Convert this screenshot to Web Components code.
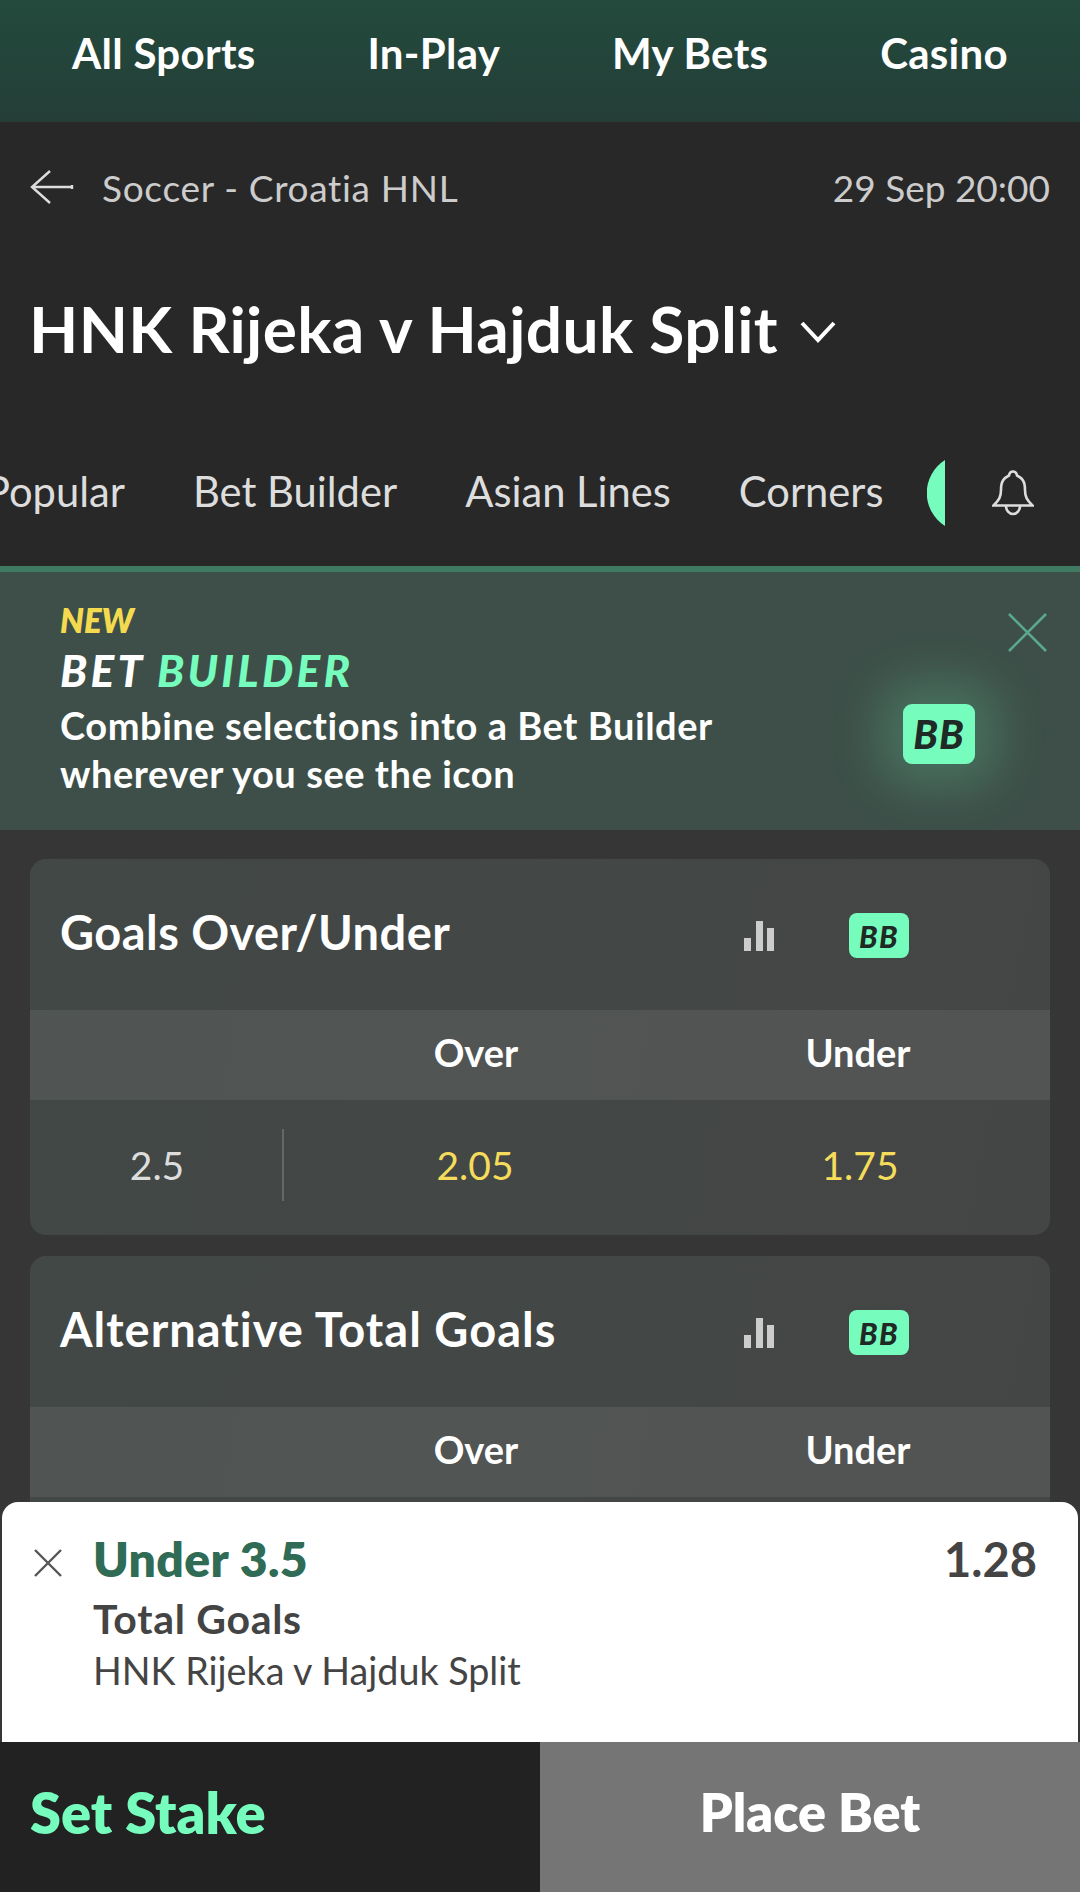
<!DOCTYPE html>
<html lang="en"><head><meta charset="utf-8"><title>HNK Rijeka v Hajduk Split</title>
<style>html,body{margin:0;padding:0;background:#363636}body{font-family:Lato,"Noto Sans",sans-serif;font-variant-ligatures:none;width:1080px;height:1892px;overflow:hidden}</style>
</head><body>
<x-app>
  <x-topnav><span>All Sports</span><span>In-Play</span><span>My Bets</span><span>Casino</span></x-topnav>
  <x-event-head crumb="Soccer - Croatia HNL" date="29 Sep 20:00" name="HNK Rijeka v Hajduk Split"></x-event-head>
  <x-tabs><span>Popular</span><span>Bet Builder</span><span>Asian Lines</span><span>Corners</span></x-tabs>
  <x-promo></x-promo>
  <x-markets>
    <x-market name="Goals Over/Under" track=".45"><x-odds-row line="2.5" over="2.05" under="1.75"></x-odds-row></x-market>
    <x-market name="Alternative Total Goals" track="1"><x-odds-row></x-odds-row></x-market>
  </x-markets>
  <x-betslip></x-betslip>
</x-app>
<script>
const def=(name,html)=>customElements.define(name,class extends HTMLElement{
  connectedCallback(){ if(this.shadowRoot) return;
    const r=this.attachShadow({mode:'open'});
    r.innerHTML=typeof html==='function'?html(this):html; }
});
const a=(el,n)=>el.getAttribute(n)||'';
customElements.define('x-bb',class extends HTMLElement{connectedCallback(){if(this.shadowRoot)return;
  const big=this.hasAttribute('big');
  this.attachShadow({mode:'open'}).innerHTML=`<style>:host{display:flex;align-items:center;justify-content:center;background:#76fdbd;color:#1f2a26;font-weight:900;font-style:italic;box-sizing:border-box;
  width:${big?72:60}px;height:${big?60:45}px;border-radius:${big?9:8}px;font-size:${big?40:30}px;line-height:1;letter-spacing:${big?1:1.5}px;${big?'box-shadow:0 0 50px 22px rgba(118,253,189,.2);':''}}</style><span>BB</span>`;}});
def('x-app',`<style>:host{display:block;position:relative;width:1080px;height:1892px;overflow:hidden;background:#363636}</style><slot></slot>`);
def('x-topnav',`<style>:host{display:flex;height:122px;box-sizing:border-box;padding:0 72px 16px;align-items:center;justify-content:space-between;background:linear-gradient(#234a3d,#243e37);color:#fff;font-size:42px;font-weight:700}
::slotted(span){display:block;letter-spacing:.3px}</style><slot></slot>`);
def('x-event-head',el=>`<style>:host{display:block;background:#282828}
.c{display:flex;align-items:center;height:132px;box-sizing:border-box;padding:0 30px 2px;color:#ccc;font-size:37px}
.cr{letter-spacing:.7px}
svg.b{width:44px;height:34px;margin-right:28px;flex:none}
.d{margin-left:auto}
.t{display:flex;align-items:center;height:152px;box-sizing:border-box;padding:0 30px 4px 29px;color:#fff;font-size:64px;font-weight:700;letter-spacing:.35px}
svg.ch{width:38px;height:24px;margin-left:21px;margin-top:8px;flex:none}
</style>
<div class="c"><svg class="b" viewBox="0 0 44 34"><path d="M20 1 2 17 20 33M2 17H42M42 15v4" fill="none" stroke="#ddd" stroke-width="2.4"/></svg><span class="cr">${a(el,'crumb')}</span><span class="d">${a(el,'date')}</span></div>
<div class="t"><span>${a(el,'name')}</span><svg class="ch" viewBox="0 0 38 24"><path d="M3 3 19 20 35 3" fill="none" stroke="#fff" stroke-width="4"/></svg></div>`);
def('x-tabs',`<style>:host{display:flex;align-items:center;height:160px;box-sizing:border-box;padding:14px 0 0;background:#282828;color:#ddd;font-size:41.7px;overflow:hidden;white-space:nowrap}
.l{display:flex;gap:68px;margin-left:-15px;flex:none;width:896px;margin-top:-4px}
::slotted(span){display:block;flex:none}
svg{flex:none}
.h{width:18px;height:66px;margin-left:46px}
.bell{width:42px;height:46px;margin-left:47px}
</style><div class="l"><slot></slot></div>
<svg class="h" viewBox="0 0 18 66"><path d="M18 0A39 39 0 0 0 18 66Z" fill="#76fdbd"/></svg>
<svg class="bell" viewBox="0 0 42 46" fill="none" stroke="#ddd" stroke-width="2.6"><path d="M1.5 35.5C7 30 9 27 9 20 9 11 12 8 17 5.5 17.5 2.5 19 1.5 21 1.5 23 1.5 24.5 2.5 25 5.5 30 8 33 11 33 20 33 27 35 30 40.5 35.5Z"/><path d="M14 36a7 8 0 0 0 14 0"/></svg>`);
def('x-promo',`<style>:host{display:flex;height:264px;box-sizing:border-box;border-top:6px solid #3f7a62;background:#3d4f48;padding:29px 33px 0 60px;color:#fff}
.m{flex:1;min-width:0}
.n{color:#f4da4f;font-size:33px;font-weight:800;font-style:italic;line-height:38px}
.h{font-size:44px;font-weight:900;font-style:italic;line-height:50px;letter-spacing:3.3px;margin-top:6px}
.h b{color:#76fdbd;font-weight:900}
.p{font-size:38px;font-weight:700;line-height:48px;margin-top:6px;letter-spacing:.55px}
.r{width:120px;display:flex;flex-direction:column;align-items:flex-end}
svg{width:39px;height:39px;margin-top:12px;display:block}
x-bb{margin-top:52px;margin-right:72px;flex:none}
</style><div class="m"><div class="n">NEW</div><div class="h">BET <b>BUILDER</b></div><div class="p">Combine selections into a Bet Builder<br>wherever you see the icon</div></div>
<div class="r"><svg viewBox="0 0 39 39"><path d="M1 1 38 38M38 1 1 38" stroke="#5aa98c" stroke-width="2.6"/></svg><x-bb big></x-bb></div>`);
def('x-markets',`<style>:host{display:flex;flex-direction:column;gap:21px;padding:29px 30px 0}</style><slot></slot>`);
def('x-market',el=>`<style>:host{display:block;border-radius:16px;overflow:hidden;background:linear-gradient(100deg,#424846,#444645);color:#fff}
.h{display:flex;align-items:center;height:151px;box-sizing:border-box;padding:0 0 6px 30px}
.t{flex:1;font-size:47px;font-weight:700;letter-spacing:${a(el,'track')}px}
svg{width:30px;height:30px;flex:none;margin-top:9px}
x-bb{margin:8px 141px 0 75px}
.s{display:grid;grid-template-columns:256px 380px 384px;height:90px;box-sizing:border-box;padding-bottom:6px;align-items:center;background:linear-gradient(100deg,#505553,#525453);font-size:38px;font-weight:700;text-align:center}
</style><div class="h"><span class="t">${a(el,'name')}</span><svg viewBox="0 0 30 30" fill="#ccc"><rect x="0" y="17" width="7" height="13"/><rect x="12" y="0" width="7" height="30"/><rect x="23" y="7" width="7" height="23"/></svg><x-bb></x-bb></div>
<div class="s"><span></span><span>Over</span><span>Under</span></div><slot></slot>`);
def('x-odds-row',el=>`<style>:host{display:grid;grid-template-columns:254px 382px 384px;height:135px;box-sizing:border-box;padding-bottom:5px;align-items:center;text-align:center;font-size:39px}
.l{color:#ddd;height:72px;display:flex;align-items:center;justify-content:center;border-right:2px solid #666;box-sizing:border-box;padding-left:2px;width:254px}
.o{color:#f5dc5a}.o+.o{padding-left:4px}</style><span class="l" ${a(el,'line')?'':'style="border:0"'}>${a(el,'line')}</span><span class="o">${a(el,'over')}</span><span class="o">${a(el,'under')}</span>`);
def('x-betslip',`<style>:host{position:absolute;left:0;right:0;bottom:0;display:block;color:#444}
.p{margin:0 2px;height:240px;box-sizing:border-box;background:#fff;border-radius:16px 16px 0 0;display:grid;grid-template-columns:91px 1fr auto;padding-top:27px}
svg{width:28px;height:28px;margin:20px 0 0 32px;display:block}
.u{color:#2f6b55;font-size:48px;font-weight:800;line-height:60px;letter-spacing:.4px}
.g{font-size:41px;font-weight:700;line-height:50px;margin-top:5px;letter-spacing:.7px}
.e{font-size:37.7px;line-height:54px}
.o{font-size:47px;font-weight:700;line-height:60px;padding-right:41px}
.f{display:grid;grid-template-columns:540px 540px;height:150px;font-weight:800}
.f div{display:flex;align-items:center;padding-bottom:10px;box-sizing:border-box}
.s{background:#222;color:#76fdbd;padding-left:30px;font-size:56px}
.b{background:#757575;color:#fff;justify-content:center;font-size:52px}
</style><div class="p"><svg viewBox="0 0 28 28"><path d="M1 1 27 27M27 1 1 27" stroke="#555" stroke-width="2.4"/></svg><div><div class="u">Under 3.5</div><div class="g">Total Goals</div><div class="e">HNK Rijeka v Hajduk Split</div></div><div class="o">1.28</div></div>
<div class="f"><div class="s">Set Stake</div><div class="b">Place Bet</div></div>`);
</script>
</body></html>
